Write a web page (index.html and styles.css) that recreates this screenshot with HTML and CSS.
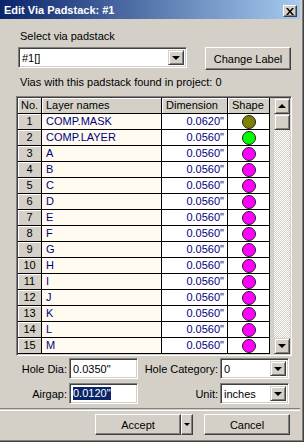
FILE: index.html
```html
<!DOCTYPE html>
<html>
<head>
<meta charset="utf-8">
<link rel="stylesheet" href="styles.css">
</head>
<body>
<div class="window">
  <div class="titlebar">
    <span class="title">Edit Via Padstack: #1</span>
    <span class="close"><svg width="8" height="7" viewBox="0 0 8 7"><path d="M0 0h2l2 2.5L6 0h2L5 3.5 8 7H6L4 4.5 2 7H0l3-3.5z" fill="#000"/></svg></span>
  </div>
  <div class="client">
    <div class="lbl-select">Select via padstack</div>
    <div class="toprow">
      <div class="combo combo-pad"><span class="combo-text">#1[]</span><span class="ddbtn"><i class="tri"></i></span></div>
      <button class="btn btn-change">Change Label</button>
    </div>
    <div class="info">Vias with this padstack found in project: 0</div>
    <div class="gridbox">
      <table class="grid">
        <colgroup><col class="c-no"><col class="c-name"><col class="c-dim"><col class="c-shape"></colgroup>
        <thead>
          <tr><th class="h-no">No.</th><th>Layer names</th><th>Dimension</th><th>Shape</th></tr>
        </thead>
        <tbody>
          <tr><td class="no">1</td><td class="name">COMP.MASK</td><td class="dim">0.0620"</td><td class="shape"><i class="dot olive"></i></td></tr>
          <tr><td class="no">2</td><td class="name">COMP.LAYER</td><td class="dim">0.0560"</td><td class="shape"><i class="dot green"></i></td></tr>
          <tr><td class="no">3</td><td class="name">A</td><td class="dim">0.0560"</td><td class="shape"><i class="dot mag"></i></td></tr>
          <tr><td class="no">4</td><td class="name">B</td><td class="dim">0.0560"</td><td class="shape"><i class="dot mag"></i></td></tr>
          <tr><td class="no">5</td><td class="name">C</td><td class="dim">0.0560"</td><td class="shape"><i class="dot mag"></i></td></tr>
          <tr><td class="no">6</td><td class="name">D</td><td class="dim">0.0560"</td><td class="shape"><i class="dot mag"></i></td></tr>
          <tr><td class="no">7</td><td class="name">E</td><td class="dim">0.0560"</td><td class="shape"><i class="dot mag"></i></td></tr>
          <tr><td class="no">8</td><td class="name">F</td><td class="dim">0.0560"</td><td class="shape"><i class="dot mag"></i></td></tr>
          <tr><td class="no">9</td><td class="name">G</td><td class="dim">0.0560"</td><td class="shape"><i class="dot mag"></i></td></tr>
          <tr><td class="no">10</td><td class="name">H</td><td class="dim">0.0560"</td><td class="shape"><i class="dot mag"></i></td></tr>
          <tr><td class="no">11</td><td class="name">I</td><td class="dim">0.0560"</td><td class="shape"><i class="dot mag"></i></td></tr>
          <tr><td class="no">12</td><td class="name">J</td><td class="dim">0.0560"</td><td class="shape"><i class="dot mag"></i></td></tr>
          <tr><td class="no">13</td><td class="name">K</td><td class="dim">0.0560"</td><td class="shape"><i class="dot mag"></i></td></tr>
          <tr><td class="no">14</td><td class="name">L</td><td class="dim">0.0560"</td><td class="shape"><i class="dot mag"></i></td></tr>
          <tr><td class="no">15</td><td class="name">M</td><td class="dim">0.0560"</td><td class="shape"><i class="dot mag"></i></td></tr>
        </tbody>
      </table>
      <div class="vscroll">
        <span class="sbtn"><i class="tri up"></i></span>
        <span class="thumb"></span>
        <span class="track"></span>
        <span class="sbtn"><i class="tri"></i></span>
      </div>
    </div>
    <div class="fields">
      <span class="flabel">Hole Dia:</span>
      <div class="edit">0.0350"</div>
      <span class="flabel">Hole Category:</span>
      <div class="combo"><span class="combo-text">0</span><span class="ddbtn"><i class="tri"></i></span></div>
      <span class="flabel">Airgap:</span>
      <div class="edit"><span class="sel">0.0120"</span></div>
      <span class="flabel">Unit:</span>
      <div class="combo"><span class="combo-text">inches</span><span class="ddbtn"><i class="tri"></i></span></div>
    </div>
  </div>
  <div class="sep"></div>
  <div class="actions">
    <button class="btn btn-accept">Accept</button>
    <button class="btn btn-split"><i class="tri small"></i></button>
    <button class="btn btn-cancel">Cancel</button>
  </div>
</div>
</body>
</html>
```

FILE: styles.css
```css
html, body {
  margin: 0;
  padding: 0;
  background: #d4d0c8;
}

body {
  font-family: "Liberation Sans", Arial, sans-serif;
  font-size: 11px;
  color: #000;
}

.window {
  width: 304px;
  height: 442px;
  box-sizing: border-box;
  background: #d4d0c8;
  padding-right: 4px;
  box-shadow: inset -1px -1px #404040, inset -2px -2px #808080;
  overflow: hidden;
}

.titlebar {
  height: 19px;
  display: flex;
  align-items: center;
  justify-content: space-between;
  padding: 0 3px 0 4px;
  background: linear-gradient(to right, #0a246a, #a6caf0);
}

.title {
  color: #fff;
  font-weight: bold;
  font-size: 11px;
}

.close {
  width: 14px;
  height: 12px;
  box-sizing: border-box;
  display: flex;
  align-items: center;
  justify-content: center;
  background: #d4d0c8;
  border: 1px solid;
  border-color: #fff #404040 #404040 #fff;
  box-shadow: inset -1px -1px #808080;
  margin-top: 3px;
}

.client {
  padding-left: 16px;
}

.lbl-select {
  margin: 11px 0 0 4px;
  line-height: 13px;
}

.toprow {
  display: flex;
  align-items: flex-start;
  margin-top: 4px;
  height: 23px;
}

.combo, .edit {
  box-sizing: border-box;
  height: 21px;
  background: #fff;
  border: 1px solid;
  border-color: #808080 #fff #fff #808080;
  box-shadow: inset 1px 1px #404040, inset -1px -1px #d4d0c8;
  display: flex;
  align-items: center;
}

.combo {
  justify-content: space-between;
  padding: 2px 2px 2px 0;
}

.combo-text {
  padding-left: 3px;
}

.combo-pad {
  width: 169px;
  margin-left: 2px;
}

.ddbtn {
  width: 16px;
  height: 15px;
  box-sizing: border-box;
  background: #d4d0c8;
  border: 1px solid;
  border-color: #d4d0c8 #404040 #404040 #d4d0c8;
  box-shadow: inset 1px 1px #fff, inset -1px -1px #808080;
  display: flex;
  align-items: center;
  justify-content: center;
}

.tri {
  display: block;
  width: 0;
  height: 0;
  border-left: 4px solid transparent;
  border-right: 4px solid transparent;
  border-top: 4px solid #000;
}

.tri.up {
  border-top: 0;
  border-bottom: 4px solid #000;
}

.tri.small {
  border-left-width: 3px;
  border-right-width: 3px;
  border-top-width: 3px;
}

.btn {
  font-family: inherit;
  font-size: 11px;
  color: #000;
  background: #d4d0c8;
  box-sizing: border-box;
  border: 1px solid;
  border-color: #fff #404040 #404040 #fff;
  box-shadow: inset -1px -1px #808080, inset 1px 1px #d4d0c8;
  padding: 0;
  margin: 0;
  display: flex;
  align-items: center;
  justify-content: center;
}

.btn-change {
  width: 86px;
  height: 23px;
  margin-left: 18px;
}

.info {
  margin: 6px 0 0 4px;
  line-height: 13px;
}

.gridbox {
  margin-top: 7px;
  width: 276px;
  height: 260px;
  box-sizing: border-box;
  border: 1px solid;
  border-color: #808080 #fff #fff #808080;
  box-shadow: inset 1px 1px #404040, inset -1px -1px #d4d0c8;
  padding: 1px;
  display: flex;
  justify-content: space-between;
  background: #d4d0c8;
}

.grid {
  border-collapse: separate;
  border-spacing: 0;
  table-layout: fixed;
  width: 252px;
  align-self: flex-start;
}

.c-no { width: 24px; }
.c-name { width: 120px; }
.c-dim { width: 66px; }
.c-shape { width: 42px; }

.grid th, .grid td {
  padding: 0;
  height: 15px;
  line-height: 15px;
  border-right: 1px solid #000;
  border-bottom: 1px solid #000;
  white-space: nowrap;
  overflow: hidden;
  font-weight: normal;
}

.grid th {
  background: #d4d0c8;
  text-align: left;
  padding-left: 4px;
  box-shadow: inset 1px 1px #fff;
}

.grid th.h-no {
  padding-left: 3px;
}

.grid td.no {
  background: #d4d0c8;
  text-align: center;
  box-shadow: inset 1px 1px #fff;
}

.grid td.name {
  background: #fffbf0;
  color: #000080;
  padding-left: 4px;
}

.grid td.dim {
  background: #fff;
  color: #000080;
  text-align: right;
  padding-right: 3px;
}

.grid td.shape {
  background: #fff;
  text-align: center;
}

.dot {
  display: inline-block;
  width: 14px;
  height: 14px;
  box-sizing: border-box;
  border-radius: 50%;
  border: 1px solid #202020;
  vertical-align: top;
  margin-top: 1px;
}

.dot.olive { background: #808000; }
.dot.green { background: #00ff00; }
.dot.mag { background: #ff00ff; }

.vscroll {
  width: 16px;
  display: flex;
  flex-direction: column;
}

.sbtn, .thumb {
  width: 16px;
  height: 16px;
  box-sizing: border-box;
  background: #d4d0c8;
  border: 1px solid;
  border-color: #d4d0c8 #404040 #404040 #d4d0c8;
  box-shadow: inset 1px 1px #fff, inset -1px -1px #808080;
  display: flex;
  align-items: center;
  justify-content: center;
}

.track {
  flex: 1;
  background-color: #fff;
  background-image: repeating-conic-gradient(#d4d0c8 0 25%, #fff 0 50%);
  background-size: 2px 2px;
}

.fields {
  margin-top: 2px;
  display: grid;
  grid-template-columns: 51px 69px 78px 69px;
  grid-auto-rows: 21px;
  column-gap: 2px;
  row-gap: 4px;
  align-items: center;
}

.flabel {
  text-align: right;
}

.edit {
  padding-left: 3px;
}

.sel {
  background: #0a246a;
  color: #fff;
  line-height: 13px;
}

.sep {
  margin-top: 4px;
  height: 1px;
  border-top: 1px solid #808080;
  border-bottom: 1px solid #fff;
}

.actions {
  margin-top: 3px;
  display: flex;
  padding-left: 95px;
}

.btn-accept {
  width: 86px;
  height: 21px;
}

.btn-split {
  width: 12px;
  height: 21px;
}

.btn-cancel {
  width: 86px;
  height: 21px;
  margin-left: 11px;
}
```
